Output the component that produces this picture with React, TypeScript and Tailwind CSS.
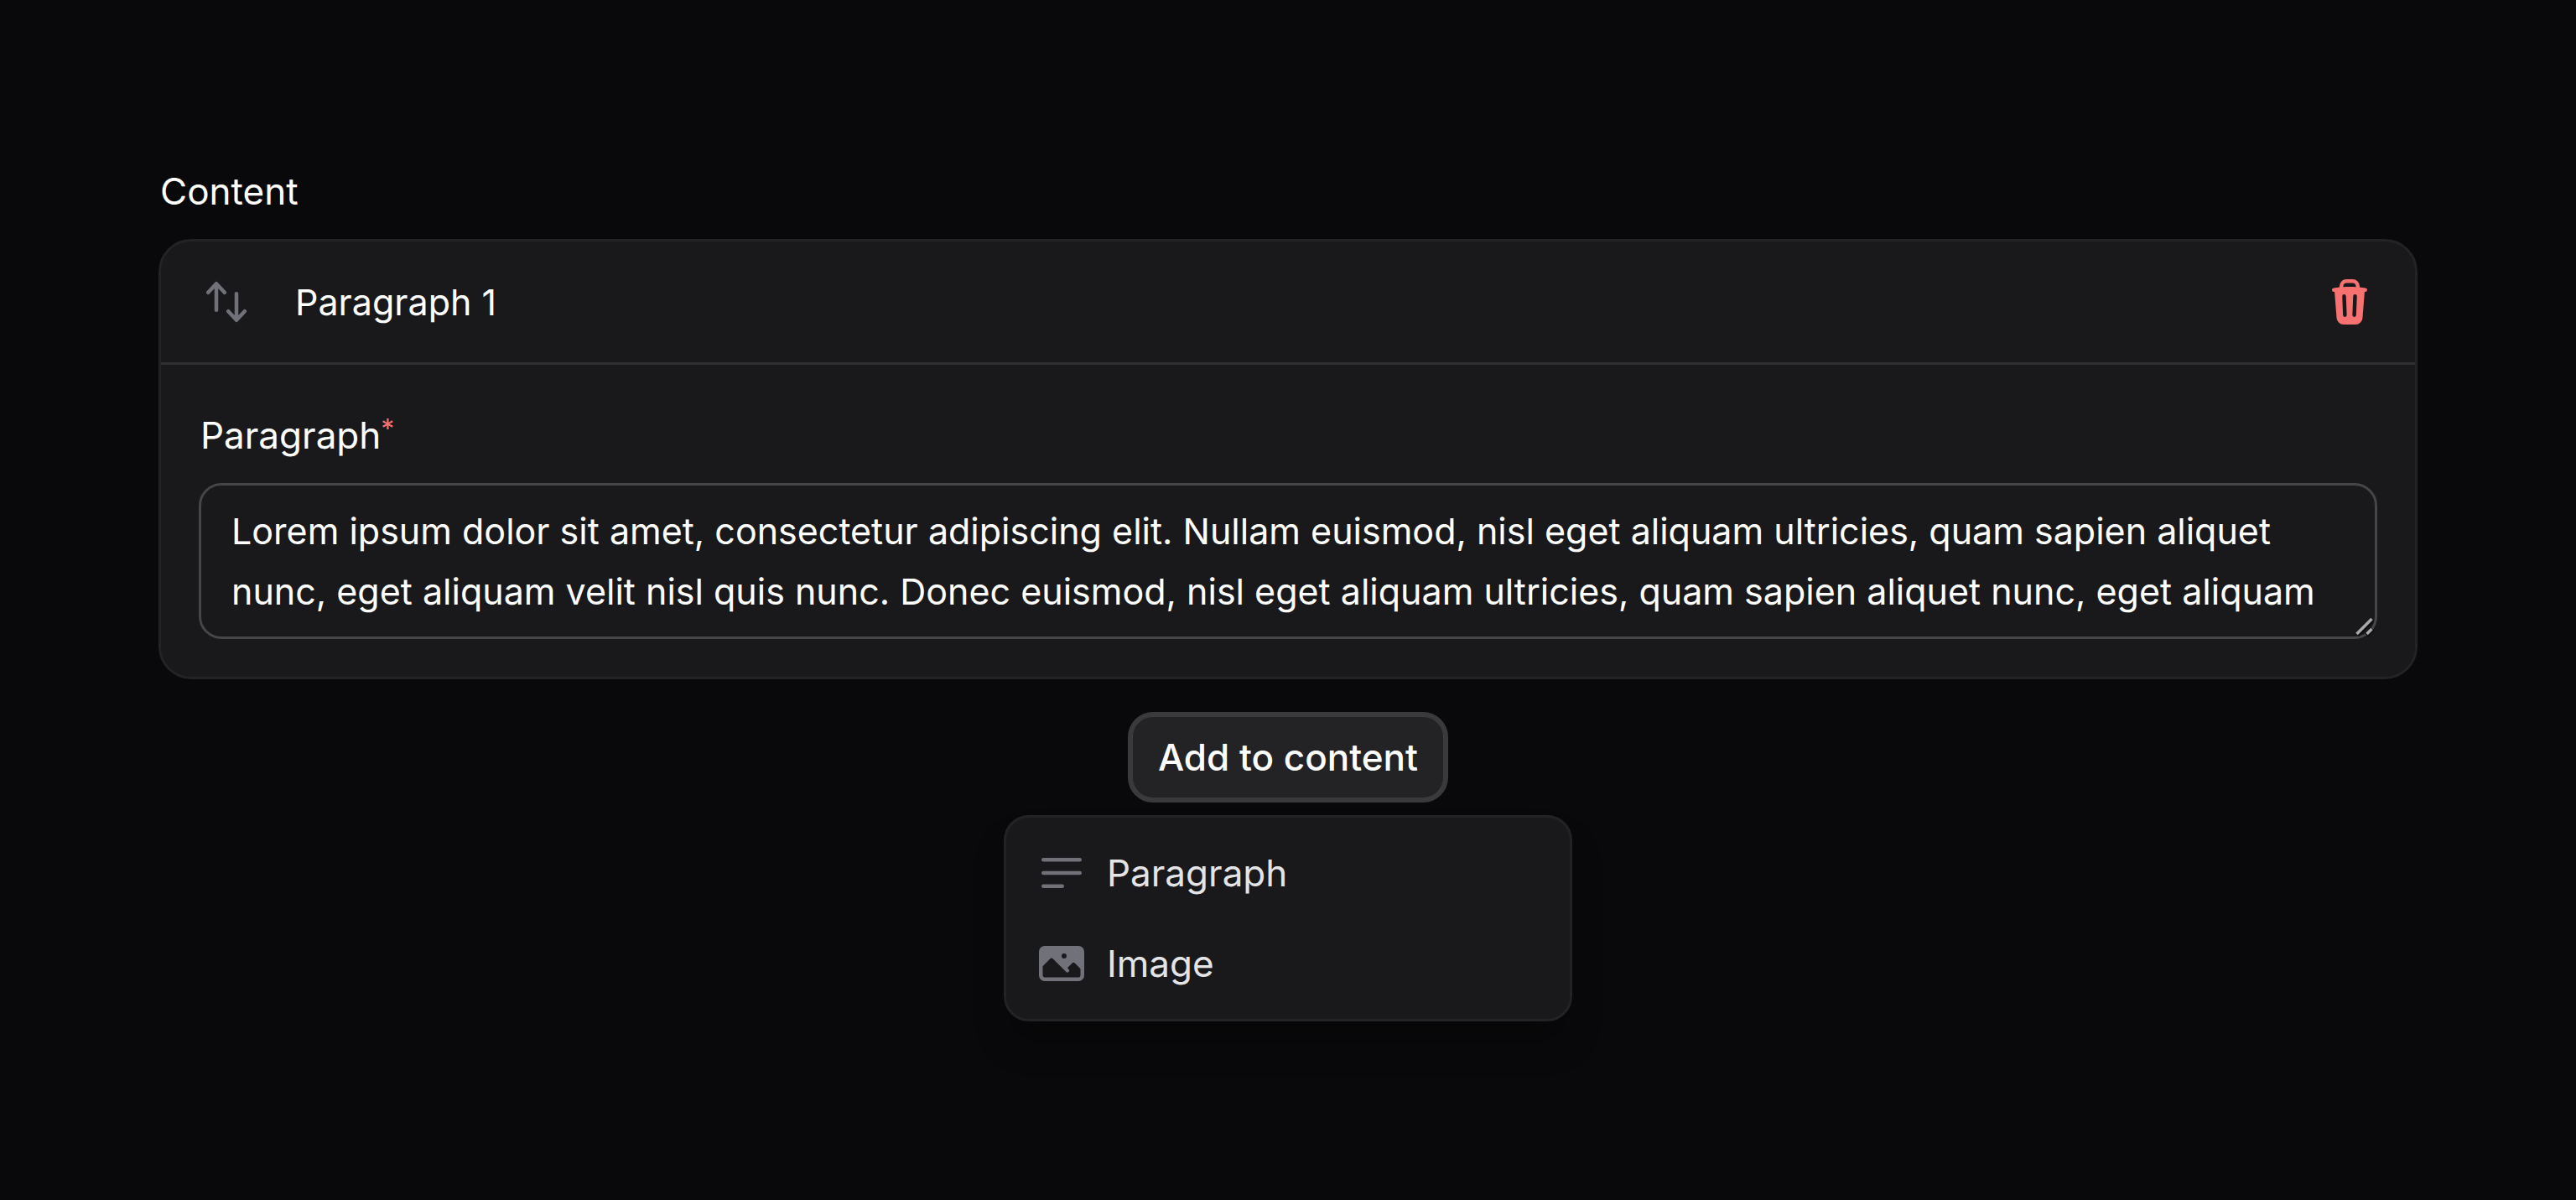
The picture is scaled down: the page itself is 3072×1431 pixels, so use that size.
import { useState } from "react";
import {
  HiMiniArrowsUpDown,
  HiMiniBars3BottomLeft,
  HiMiniPhoto,
  HiMiniTrash,
} from "react-icons/hi2";

const LOREM =
  "Lorem ipsum dolor sit amet, consectetur adipiscing elit. Nullam euismod, nisl eget aliquam ultricies, quam sapien aliquet nunc, eget aliquam velit nisl quis nunc. Donec euismod, nisl eget aliquam ultricies, quam sapien aliquet nunc, eget aliquam";

const blocks = [
  { label: "Paragraph", Icon: HiMiniBars3BottomLeft },
  { label: "Image", Icon: HiMiniPhoto },
];

function ResizeGrip() {
  return (
    <svg
      className="pointer-events-none absolute right-[3px] bottom-[3px] size-6"
      viewBox="0 0 24 24"
      fill="none"
      aria-hidden="true"
    >
      <path d="M3 22 21 4M14 22l7-7" stroke="#0c0c0e" strokeWidth="6" />
      <path d="M2.5 21 20.5 3M14.5 21l6-6" stroke="#a8a8a8" strokeWidth="3.6" />
    </svg>
  );
}

function BlockCard() {
  const [text, setText] = useState(LOREM);
  return (
    <section className="rounded-[39px] border-3 border-[#232325] bg-[#19191b]">
      <header className="flex items-center border-b-3 border-[#2f2f31] px-12 py-9">
        <button type="button" aria-label="Reorder" className="text-[#71717a]">
          <HiMiniArrowsUpDown className="size-[60px]" />
        </button>
        <h2 className="ml-[52px] flex-1 text-[43px]">Paragraph 1</h2>
        <button type="button" aria-label="Delete" className="text-[#f87171]">
          <HiMiniTrash className="size-[60px]" />
        </button>
      </header>
      <div className="px-[45px] pt-12 pb-[45px]">
        <label htmlFor="paragraph" className="block pl-[2px]">
          Paragraph
          <sup className="-top-3 text-[32px] leading-none text-[#f87171]">*</sup>
        </label>
        <div className="relative mt-[21px]">
          <textarea
            id="paragraph"
            rows={2}
            required
            value={text}
            onChange={(e) => setText(e.target.value)}
            className="block w-full resize-none overflow-hidden rounded-[27px] border-3 border-[#464648] bg-transparent px-9 py-[18px] text-[43px] outline-none"
          />
          <ResizeGrip />
        </div>
      </div>
    </section>
  );
}

export default function App() {
  return (
    <main className="min-h-screen bg-[#09090b] px-[189px] pt-48 font-['Inter',sans-serif] text-[44px] leading-[72px] text-white">
      <h1 className="mb-[21px] pl-[2px]">Content</h1>
      <BlockCard />
      <div className="mt-[39px] flex flex-col items-center gap-[15px]">
        <button
          type="button"
          aria-haspopup="menu"
          aria-expanded="true"
          className="rounded-[30px] border-6 border-[#3a3a3c] bg-[#232325] px-[30px] py-3 font-medium"
        >
          Add to content
        </button>
        <div
          role="menu"
          className="w-[678px] rounded-[30px] border-3 border-[#232325] bg-[#19191b] p-3 shadow-[0_30px_45px_-9px_rgba(0,0,0,0.3)]"
        >
          {blocks.map(({ label, Icon }) => (
            <button
              key={label}
              type="button"
              role="menuitem"
              className="flex w-full items-center gap-6 px-6 py-[18px] text-left text-[#e4e4e7]"
            >
              <Icon className="size-[60px] text-[#71717a]" />
              {label}
            </button>
          ))}
        </div>
      </div>
    </main>
  );
}
